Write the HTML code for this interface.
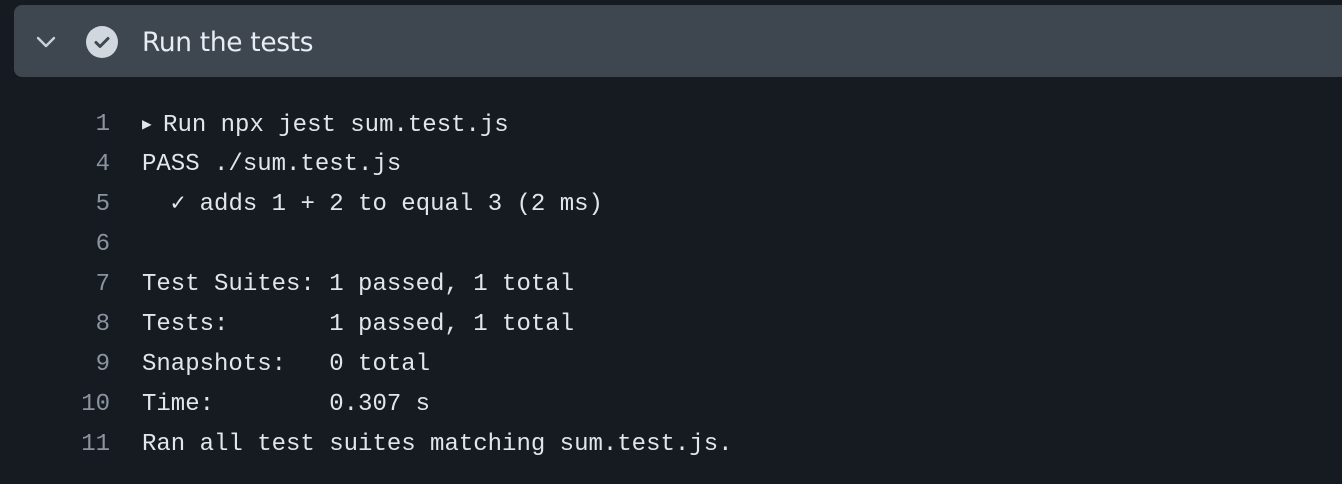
<!DOCTYPE html>
<html><head><style>
body{margin:0;background:#161b22;width:1342px;height:484px;overflow:hidden;font-family:"Liberation Sans",sans-serif}
.hdr{position:absolute;left:14px;top:5px;width:1328px;height:72px;background:#3e4650;border-radius:8px 0 0 8px}
.title{position:absolute;left:128px;top:2px;line-height:72px;font-size:26.4px;color:#e6edf3;font-family:"DejaVu Sans","Liberation Sans",sans-serif;letter-spacing:-0.3px}
.ln{position:absolute;left:0;width:110px;text-align:right;color:#8b949e}
.tx{position:absolute;left:142px;color:#e1e6eb;white-space:pre}
.row{position:absolute;left:0;height:40px;line-height:40px;font-family:"Liberation Mono",monospace;font-size:24px;width:1342px}
</style></head><body>
<div class="hdr">
<svg style="position:absolute;left:20px;top:29px" width="24" height="18" viewBox="0 0 24 18"><path d="M4 4 L12 12 L20 4" fill="none" stroke="#c9d1d9" stroke-width="2.4" stroke-linecap="round" stroke-linejoin="round"/></svg>
<svg style="position:absolute;left:72px;top:21px" width="32" height="32" viewBox="0 0 32 32"><circle cx="16" cy="16" r="16" fill="#d0d7de"/><path d="M10 16.5 L14 20.5 L22 12.5" fill="none" stroke="#3e4650" stroke-width="3" stroke-linecap="round" stroke-linejoin="round"/></svg>
<div class="title">Run the tests</div>
</div>
<div class="row" style="top:105px"><span class="ln">1</span><span class="tx"><span style="font-size:16px;vertical-align:2px;letter-spacing:-3px">▶</span> Run npx jest sum.test.js</span></div>
<div class="row" style="top:145px"><span class="ln">4</span><span class="tx">PASS ./sum.test.js</span></div>
<div class="row" style="top:185px"><span class="ln">5</span><span class="tx">  ✓ adds 1 + 2 to equal 3 (2 ms)</span></div>
<div class="row" style="top:225px"><span class="ln">6</span><span class="tx"></span></div>
<div class="row" style="top:265px"><span class="ln">7</span><span class="tx">Test Suites: 1 passed, 1 total</span></div>
<div class="row" style="top:305px"><span class="ln">8</span><span class="tx">Tests:       1 passed, 1 total</span></div>
<div class="row" style="top:345px"><span class="ln">9</span><span class="tx">Snapshots:   0 total</span></div>
<div class="row" style="top:385px"><span class="ln">10</span><span class="tx">Time:        0.307 s</span></div>
<div class="row" style="top:425px"><span class="ln">11</span><span class="tx">Ran all test suites matching sum.test.js.</span></div>
</body></html>
